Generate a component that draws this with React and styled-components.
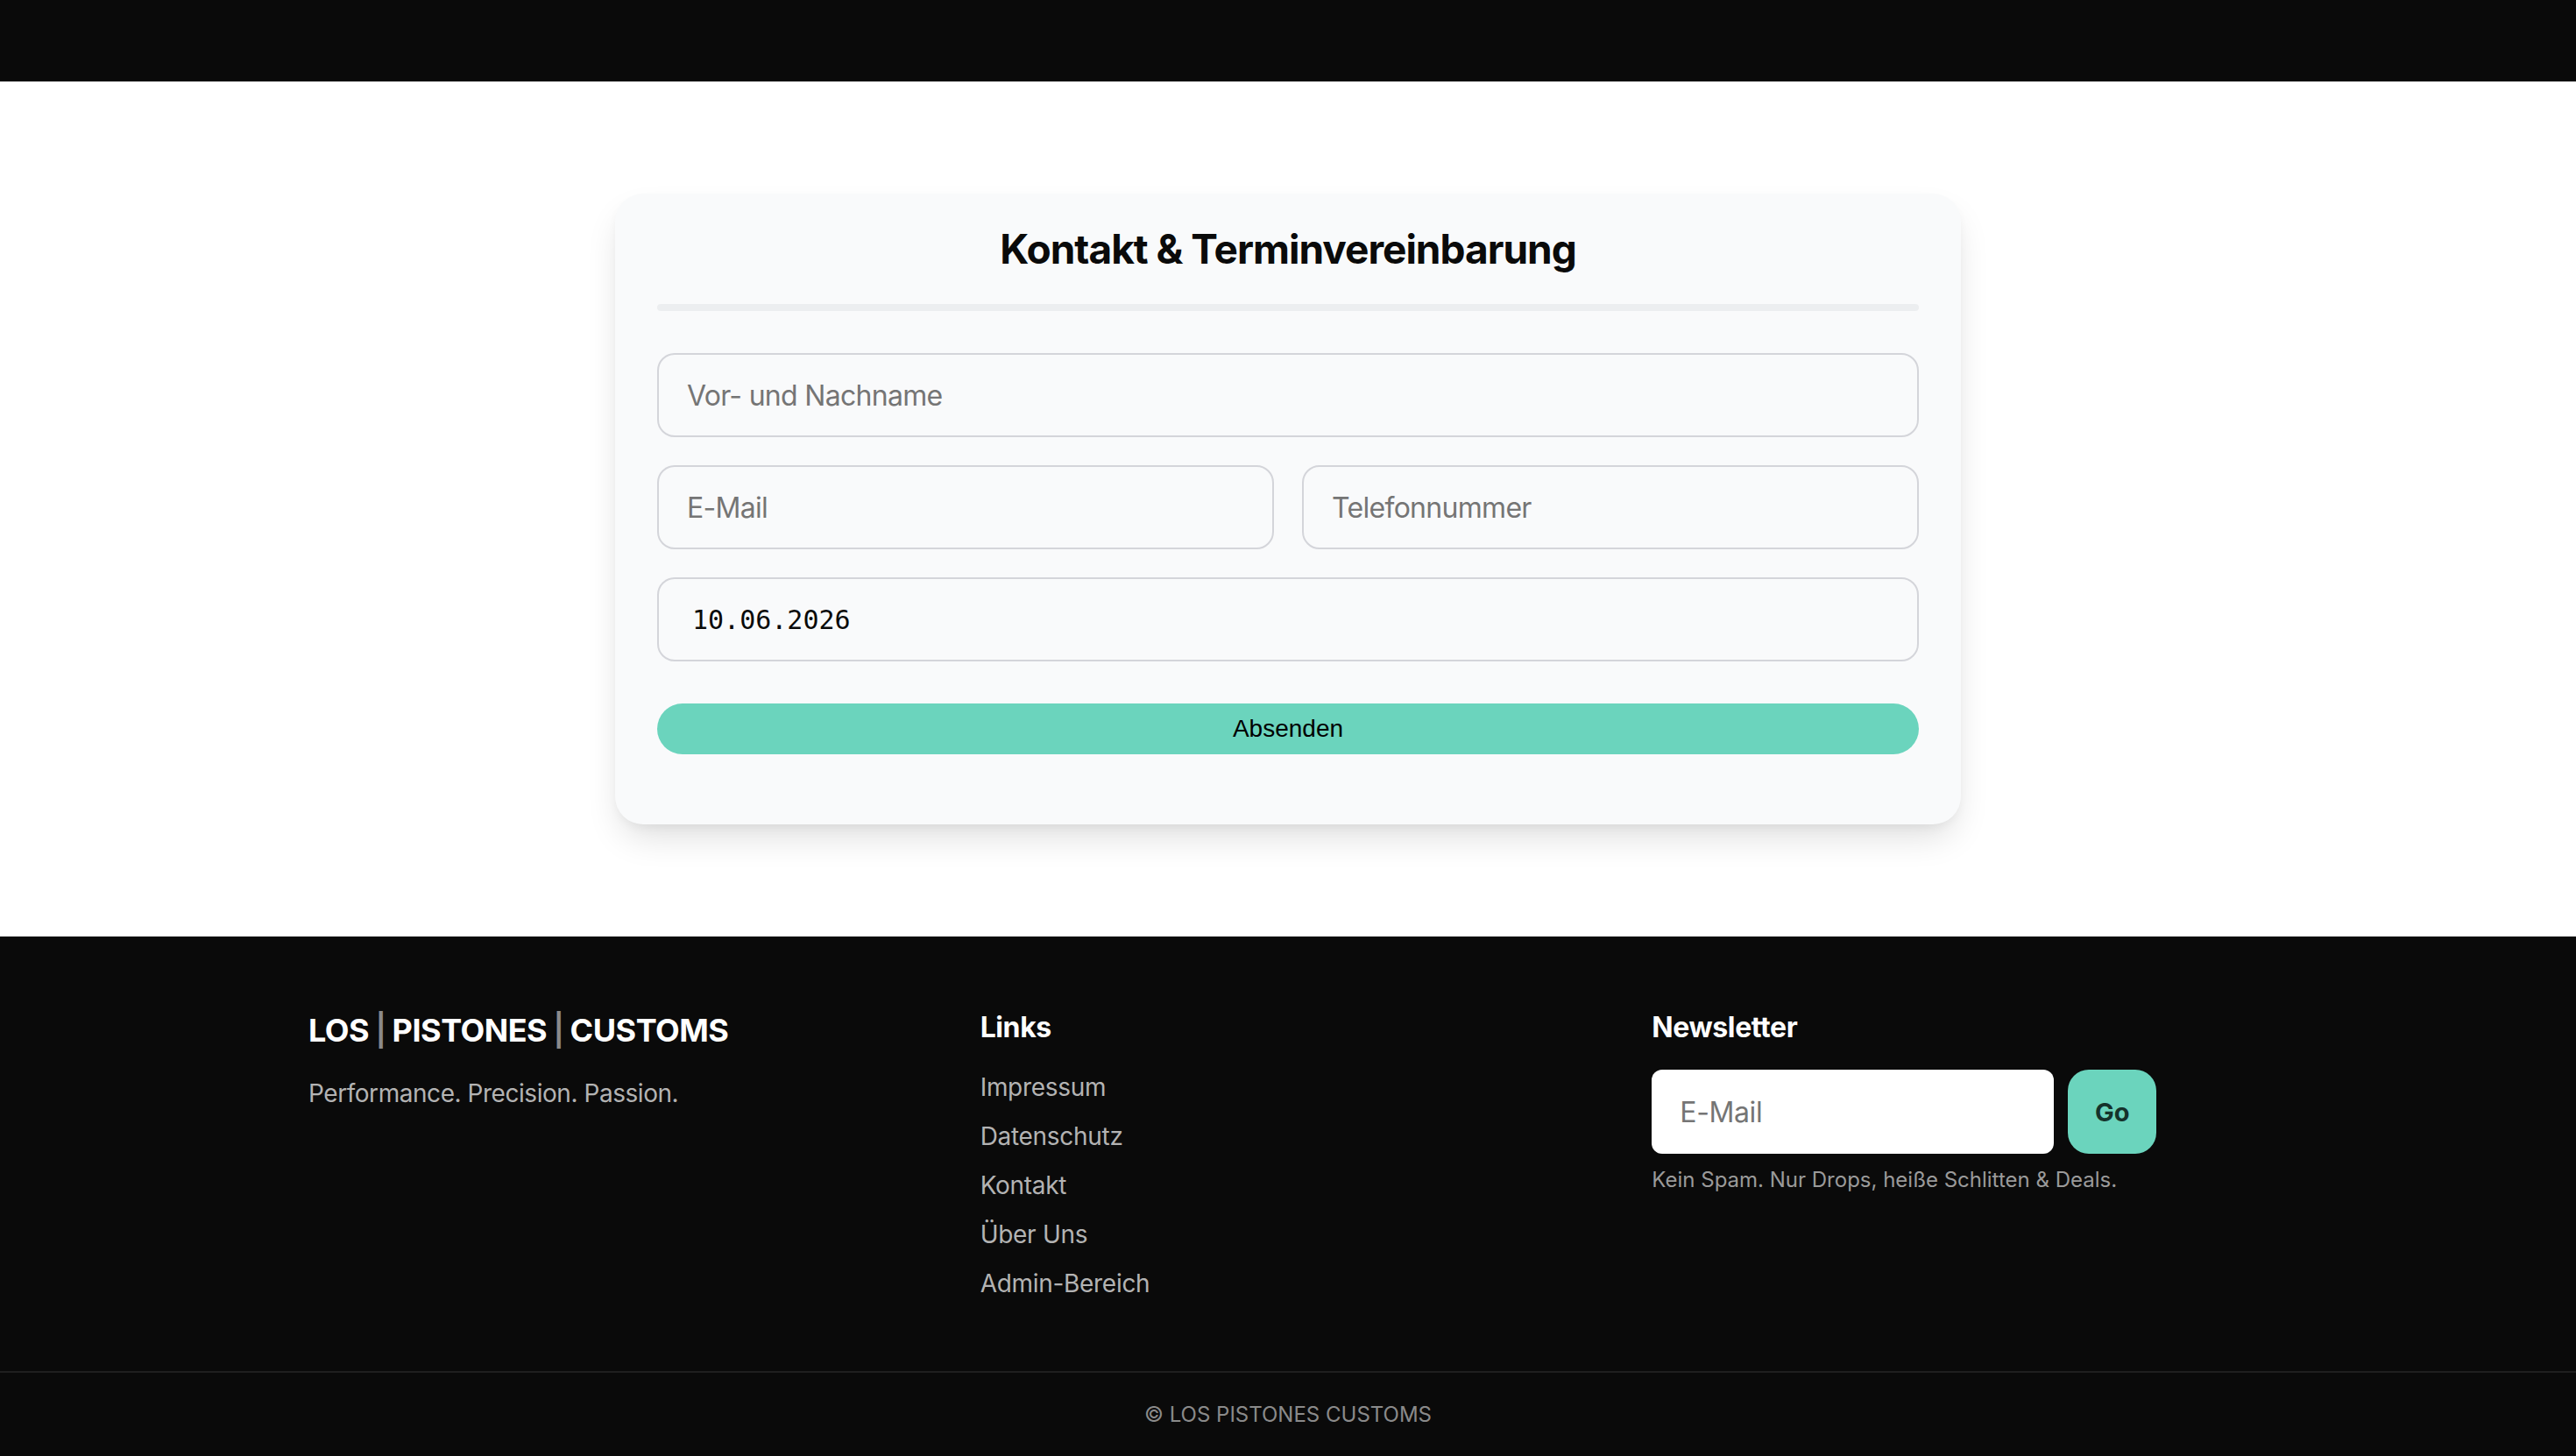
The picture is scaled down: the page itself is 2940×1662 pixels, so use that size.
import React from "react";
import styled, { createGlobalStyle } from "styled-components";

const GlobalStyle = createGlobalStyle`
  * { box-sizing: border-box; }
  html, body { margin: 0; padding: 0; background: #ffffff; }
  body { font-family: Inter, "Noto Sans", Roboto, sans-serif; color: #0a0a0a; }
  input::placeholder { color: #757575; opacity: 1; }
`;

const Page = styled.div`
  display: flex;
  flex-direction: column;
  min-height: 100vh;
`;

const TopBar = styled.header`
  height: 93px;
  background: #0a0a0a;
`;

const Main = styled.main`
  display: flex;
  justify-content: center;
  padding: 128px 0;
  background: #ffffff;
`;

const Card = styled.section`
  width: 1536px;
  background: #f9fafb;
  border-radius: 32px;
  padding: 34px 48px 80px;
  box-shadow: 0 20px 40px -8px rgba(0, 0, 0, 0.14), 0 6px 14px -4px rgba(0, 0, 0, 0.06);
`;

const Title = styled.h2`
  margin: 0;
  font-size: 46px;
  line-height: 58px;
  font-weight: 700;
  letter-spacing: -1px;
  text-align: center;
  color: #0a0a0a;
`;

const Divider = styled.div`
  height: 8px;
  margin-top: 34px;
  border-radius: 4px;
  background: #eceef0;
`;

const Form = styled.form`
  display: flex;
  flex-direction: column;
  gap: 32px;
  margin-top: 48px;
`;

const Row = styled.div`
  display: grid;
  grid-template-columns: 1fr 1fr;
  gap: 32px;
`;

const Field = styled.input`
  width: 100%;
  height: 96px;
  padding: 0 ${(p) => (p.$mono ? "38px" : "32px")};
  border: 2px solid #d4d5da;
  border-radius: 20px;
  background: #f9fafb;
  font-family: ${(p) =>
    p.$mono ? '"DejaVu Sans Mono", "Liberation Mono", monospace' : 'Inter, "Noto Sans", sans-serif'};
  font-size: ${(p) => (p.$mono ? "30px" : "32px")};
  letter-spacing: ${(p) => (p.$mono ? "0" : "-0.7px")};
  color: #0a0a0a;
  outline: none;
`;

const SubmitButton = styled.button`
  margin-top: 16px;
  height: 58px;
  border: none;
  border-radius: 29px;
  background: #6bd4bd;
  color: #000000;
  font-family: "Liberation Sans", Arial, sans-serif;
  font-size: 28px;
  cursor: pointer;
`;

const Footer = styled.footer`
  background: #0a0a0a;
  color: #ffffff;
`;

const FooterGrid = styled.div`
  max-width: 2236px;
  margin: 0 auto;
  padding: 80px 0;
  display: grid;
  grid-template-columns: repeat(3, 1fr);
  gap: 64px;
`;

const Column = styled.div`
  display: flex;
  flex-direction: column;
`;

const Brand = styled.div`
  font-size: 36px;
  line-height: 54px;
  font-weight: 700;
  letter-spacing: -0.5px;
  color: #ffffff;
`;

const Pipe = styled.span`
  color: #8a8a8a;
  font-weight: 600;
  margin: 0 -1px;
`;

const Tagline = styled.p`
  margin: 24px 0 0;
  font-size: 28px;
  line-height: 42px;
  letter-spacing: -0.45px;
  color: #b3b3b3;
`;

const ColTitle = styled.h4`
  margin: 0;
  font-size: 32px;
  line-height: 48px;
  font-weight: 700;
  letter-spacing: -0.4px;
  color: #ffffff;
`;

const LinkList = styled.ul`
  list-style: none;
  margin: 24px 0 0;
  padding: 0;
  display: flex;
  flex-direction: column;
  gap: 16px;
`;

const LinkItem = styled.li`
  font-size: 28px;
  line-height: 40px;
  letter-spacing: -0.3px;
  color: #b3b3b3;
`;

const NewsForm = styled.form`
  display: flex;
  gap: 16px;
  margin-top: 24px;
`;

const NewsInput = styled.input`
  width: 459px;
  height: 96px;
  padding: 0 32px;
  border: none;
  border-radius: 12px;
  background: #ffffff;
  font-family: Inter, "Noto Sans", sans-serif;
  font-size: 32px;
  letter-spacing: -0.4px;
  outline: none;
`;

const GoButton = styled.button`
  width: 101px;
  height: 96px;
  border: none;
  border-radius: 24px;
  background: #6bd4bd;
  color: #15322b;
  font-family: Inter, "Noto Sans", sans-serif;
  font-size: 29px;
  font-weight: 700;
  cursor: pointer;
`;

const Note = styled.p`
  margin: 14px 0 0;
  font-size: 24px;
  line-height: 32px;
  color: #9a9a9a;
`;

const BottomBar = styled.div`
  border-top: 2px solid #1f1f1f;
  padding: 32px 0;
  text-align: center;
  font-size: 24px;
  line-height: 32px;
  color: #8a8a8a;
`;

export default function App() {
  return (
    <Page>
      <GlobalStyle />
      <TopBar />
      <Main>
        <Card>
          <Title>Kontakt &amp; Terminvereinbarung</Title>
          <Divider />
          <Form onSubmit={(e) => e.preventDefault()}>
            <Field type="text" placeholder="Vor- und Nachname" />
            <Row>
              <Field type="email" placeholder="E-Mail" />
              <Field type="tel" placeholder="Telefonnummer" />
            </Row>
            <Field $mono type="text" defaultValue="10.06.2026" />
            <SubmitButton type="submit">Absenden</SubmitButton>
          </Form>
        </Card>
      </Main>
      <Footer>
        <FooterGrid>
          <Column>
            <Brand>
              LOS <Pipe>|</Pipe> PISTONES <Pipe>|</Pipe> CUSTOMS
            </Brand>
            <Tagline>Performance. Precision. Passion.</Tagline>
          </Column>
          <Column>
            <ColTitle>Links</ColTitle>
            <LinkList>
              <LinkItem>Impressum</LinkItem>
              <LinkItem>Datenschutz</LinkItem>
              <LinkItem>Kontakt</LinkItem>
              <LinkItem>Über Uns</LinkItem>
              <LinkItem>Admin-Bereich</LinkItem>
            </LinkList>
          </Column>
          <Column>
            <ColTitle>Newsletter</ColTitle>
            <NewsForm onSubmit={(e) => e.preventDefault()}>
              <NewsInput type="email" placeholder="E-Mail" />
              <GoButton type="submit">Go</GoButton>
            </NewsForm>
            <Note>Kein Spam. Nur Drops, heiße Schlitten &amp; Deals.</Note>
          </Column>
        </FooterGrid>
        <BottomBar>© LOS PISTONES CUSTOMS</BottomBar>
      </Footer>
    </Page>
  );
}
